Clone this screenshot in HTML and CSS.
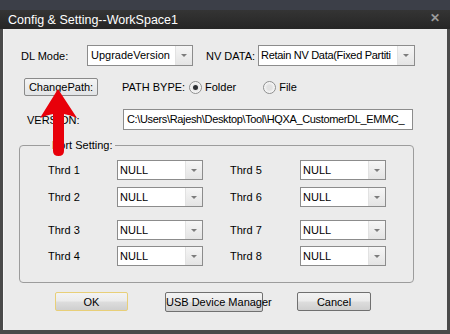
FILE: index.html
```html
<!DOCTYPE html>
<html lang="en">
<head>
    <meta charset="UTF-8">
    <title>Config &amp; Setting--WorkSpace1</title>
    <link rel="stylesheet" href="styles.css">
</head>
<body>

<div class="window">
    <div class="topstrip"></div>
    <div class="titlebar">
        <span class="title">Config &amp; Setting--WorkSpace1</span>
        <span class="close">&#x2715;</span>
    </div>

    <div class="client">
        <div class="row row-mode">
            <span class="lbl lbl-mode">DL Mode:</span>
            <div class="combo combo-mode">
                <span class="combo-text">UpgradeVersion</span>
                <span class="combo-btn"><i class="tri"></i></span>
            </div>
            <span class="lbl lbl-nv">NV DATA:</span>
            <div class="combo combo-nv">
                <span class="combo-text">Retain NV Data(Fixed Partiti</span>
                <span class="combo-btn"><i class="tri"></i></span>
            </div>
        </div>

        <div class="row row-path">
            <button class="btn btn-change">ChangePath:</button>
            <span class="lbl lbl-bype">PATH BYPE:</span>
            <span class="radio checked"></span>
            <span class="radio-text">Folder</span>
            <span class="radio"></span>
            <span class="radio-text">File</span>
        </div>

        <div class="row row-version">
            <span class="lbl lbl-version">VERSION:</span>
            <div class="textbox">C:\Users\Rajesh\Desktop\Tool\HQXA_CustomerDL_EMMC_</div>
        </div>

        <fieldset class="port">
            <legend>Port Setting:</legend>
            <div class="port-grid">
                <div class="port-row r1">
                    <span class="thrd">Thrd 1</span>
                    <div class="combo combo-port"><span class="combo-text">NULL</span><span class="combo-btn"><i class="tri"></i></span></div>
                    <span class="thrd thrd-right">Thrd 5</span>
                    <div class="combo combo-port"><span class="combo-text">NULL</span><span class="combo-btn"><i class="tri"></i></span></div>
                </div>
                <div class="port-row r2">
                    <span class="thrd">Thrd 2</span>
                    <div class="combo combo-port"><span class="combo-text">NULL</span><span class="combo-btn"><i class="tri"></i></span></div>
                    <span class="thrd thrd-right">Thrd 6</span>
                    <div class="combo combo-port"><span class="combo-text">NULL</span><span class="combo-btn"><i class="tri"></i></span></div>
                </div>
                <div class="port-row r3">
                    <span class="thrd">Thrd 3</span>
                    <div class="combo combo-port"><span class="combo-text">NULL</span><span class="combo-btn"><i class="tri"></i></span></div>
                    <span class="thrd thrd-right">Thrd 7</span>
                    <div class="combo combo-port"><span class="combo-text">NULL</span><span class="combo-btn"><i class="tri"></i></span></div>
                </div>
                <div class="port-row r4">
                    <span class="thrd">Thrd 4</span>
                    <div class="combo combo-port"><span class="combo-text">NULL</span><span class="combo-btn"><i class="tri"></i></span></div>
                    <span class="thrd thrd-right">Thrd 8</span>
                    <div class="combo combo-port"><span class="combo-text">NULL</span><span class="combo-btn"><i class="tri"></i></span></div>
                </div>
            </div>
        </fieldset>

        <div class="actions">
            <button class="btn btn-ok">OK</button>
            <button class="btn btn-usb">USB Device Manager</button>
            <button class="btn btn-cancel">Cancel</button>
        </div>
    </div>

    <!-- red pointer drawn over the dialog -->
    <svg class="arrow" width="44" height="68" viewBox="0 0 44 68">
        <path d="M19 0 L38 29 Q31 26 25 25 L25 62 Q25 67 19.5 67 Q14 67 14 62 L14 25 Q8 26 1 29 Z" fill="#e8000a"/>
    </svg>
</div>

</body>
</html>
```

FILE: styles.css
```css
* {
    box-sizing: border-box;
}
body {
    margin: 0;
    background: #3c3f48;
    font-family: 'Liberation Sans', Arial, sans-serif;
    font-size: 11px;
    color: #000;
}
.window {
    position: relative;
    width: 450px;
    height: 334px;
    background: #4a4a4a;
    display: flex;
    flex-direction: column;
}
.topstrip {
    height: 10px;
    background: #3c3f48;
}
.titlebar {
    height: 19px;
    background: linear-gradient(to bottom, #343434, #262626);
    display: flex;
    align-items: center;
    justify-content: space-between;
    padding: 0 10px 0 8px;
}
.title {
    color: #fff;
    font-size: 12.5px;
}
.close {
    color: #9a9a9a;
    font-size: 12px;
    font-weight: bold;
    margin-top: -3px;
}
.client {
    margin: 0 3px 4px 3px;
    flex: 1;
    background: #ebebeb;
    border-left: 1px solid #f6f6f6;
    padding: 16px 0 0 17px;
}
.row {
    display: flex;
    align-items: center;
}
.lbl {
    white-space: nowrap;
}
.lbl-mode {
    width: 66px;
}
.lbl-nv {
    margin-left: 13px;
    width: 52px;
}

/* combo boxes */
.combo {
    display: flex;
    height: 21px;
    background: #fff;
    border: 1px solid #8c8c8c;
}
.combo-text {
    flex: 1;
    padding-left: 3px;
    line-height: 19px;
    white-space: nowrap;
    overflow: hidden;
}
.combo-btn {
    width: 17px;
    border-left: 1px solid #e2e2e2;
    background: linear-gradient(to bottom, #f6f6f6, #e4e4e4);
    display: flex;
    align-items: center;
    justify-content: center;
}
.tri {
    width: 0;
    height: 0;
    border-left: 3px solid transparent;
    border-right: 3px solid transparent;
    border-top: 3px solid #7c7c7c;
}
.combo-mode {
    width: 106px;
}
.combo-nv {
    width: 157px;
}
.combo-nv .combo-text {
    padding-left: 2px;
    letter-spacing: -0.3px;
}

/* row 2 */
.row-path {
    margin-top: 12px;
    height: 18px;
}
.btn {
    font-family: 'Liberation Sans', Arial, sans-serif;
    font-size: 11px;
    color: #000;
    padding: 0;
    white-space: nowrap;
    border: 1px solid #707070;
    border-radius: 2px;
    background: linear-gradient(to bottom, #f3f3f3 0%, #ebebeb 48%, #dddddd 52%, #cfcfcf 100%);
}
.btn-change {
    margin-left: 3px;
    width: 74px;
    height: 18px;
    border-color: #8a8a8a;
    background: linear-gradient(to bottom, #f4f4f4, #e2e4e6);
}
.lbl-bype {
    margin-left: 24px;
    width: 67px;
}
.radio {
    width: 13px;
    height: 13px;
    border-radius: 50%;
    border: 1px solid #8e8f8f;
    background: radial-gradient(circle, #e2e2e2 30%, #f8f8f8 70%);
    display: flex;
    align-items: center;
    justify-content: center;
}
.radio.checked::after {
    content: "";
    width: 5px;
    height: 5px;
    border-radius: 50%;
    background: #2c2f33;
}
.radio-text {
    margin-left: 3px;
    margin-right: 27px;
}

/* row 3 */
.row-version {
    margin-top: 13px;
}
.lbl-version {
    margin-left: 6px;
    width: 96px;
}
.textbox {
    width: 290px;
    height: 21px;
    background: #fff;
    border: 1px solid #8c8c8c;
    line-height: 19px;
    padding-left: 3px;
    letter-spacing: -0.35px;
    white-space: nowrap;
    overflow: hidden;
}

/* port setting group */
.port {
    margin: 9px 0 0 -2px;
    width: 395px;
    height: 144px;
    border: 1px solid #9c9c9c;
    border-radius: 4px;
    padding: 0 0 0 28px;
}
.port legend {
    padding: 0 2px;
    margin-left: 2px;
    line-height: 13px;
}
.port-grid {
    display: flex;
    flex-direction: column;
    padding-top: 8px;
}
.port-row {
    display: flex;
    align-items: center;
    height: 20px;
}
.r2 {
    margin-top: 7px;
}
.r3 {
    margin-top: 13px;
}
.r4 {
    margin-top: 6px;
}
.thrd {
    width: 69px;
}
.thrd-right {
    margin-left: 27px;
    width: 70px;
}
.combo-port {
    width: 86px;
    height: 20px;
}
.combo-port .combo-text {
    line-height: 18px;
    padding-left: 2px;
}

/* bottom buttons */
.actions {
    display: flex;
    margin-top: 9px;
    padding-left: 34px;
}
.btn-ok {
    width: 73px;
    height: 19px;
    border-color: #e8cf78;
}
.btn-usb {
    margin-left: 37px;
    width: 98px;
    height: 20px;
}
.btn-cancel {
    margin-left: 34px;
    width: 74px;
    height: 19px;
}

.arrow {
    position: absolute;
    left: 39px;
    top: 89px;
}
```
